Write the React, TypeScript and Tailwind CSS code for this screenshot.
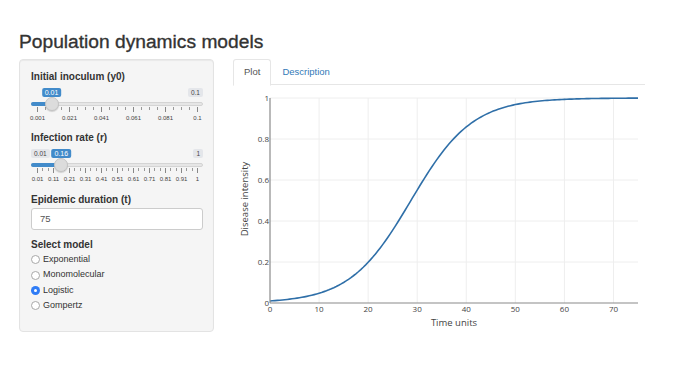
import React from "react";

type SliderProps = {
  value: number;
  min: number;
  max: number;
  valueLabel: string;
  minLabel?: string;
  maxLabel: string;
  ticks: string[];
  minor: number;
};

function Slider({ value, min, max, valueLabel, minLabel, maxLabel, ticks, minor }: SliderProps) {
  const frac = (value - min) / (max - min);
  const hx = 6 + frac * 160;
  const n = ticks.length - 1;
  const majors = ticks.map((t, i) => ({ t, x: 6 + (i * 160) / n }));
  const minors: number[] = [];
  for (let i = 0; i < n; i++) {
    for (let k = 1; k <= minor; k++) {
      minors.push(6 + ((i + k / (minor + 1)) * 160) / n);
    }
  }
  return (
    <div className="relative w-[172px] h-[34px] mt-[5px]">
      {minLabel && (
        <div className="absolute left-0 top-0 h-[9px] px-[3px] bg-[#e4e6ea] text-[#444] text-[6.5px] leading-[9px] rounded-[2px]">
          {minLabel}
        </div>
      )}
      <div className="absolute right-0 top-0 h-[9px] px-[3px] bg-[#e4e6ea] text-[#444] text-[6.5px] leading-[9px] rounded-[2px]">
        {maxLabel}
      </div>
      <div
        className="absolute top-0 h-[9px] px-[3px] bg-[#428bca] text-white text-[7px] leading-[9px] rounded-[2px] -translate-x-1/2"
        style={{ left: hx }}
      >
        {valueLabel}
      </div>
      <div className="absolute left-0 right-0 top-[14px] h-[4px] rounded-full bg-[#e6e6e6] border border-[#d4d4d4]" />
      <div className="absolute left-0 top-[14px] h-[4px] rounded-full bg-[#428bca]" style={{ width: hx }} />
      {majors.map((m, i) => (
        <div key={"M" + i} className="absolute top-[19px] w-px h-[5px] bg-[#888]" style={{ left: m.x }} />
      ))}
      {minors.map((x, i) => (
        <div key={"m" + i} className="absolute top-[19px] w-px h-[3px] bg-[#999]" style={{ left: x }} />
      ))}
      {majors.map((m, i) => (
        <div
          key={"L" + i}
          className="absolute top-[26px] text-[6px] leading-[8px] text-[#444] -translate-x-1/2 whitespace-nowrap"
          style={{ left: m.x + 0.5 }}
        >
          {m.t}
        </div>
      ))}
      <div
        className="absolute top-[9px] w-[14px] h-[14px] rounded-full bg-[#dcdcdc] border border-[#c4c4c4] -translate-x-1/2 shadow-[0_1px_1px_rgba(0,0,0,0.15)]"
        style={{ left: hx }}
      />
    </div>
  );
}

function Radio({ label, checked }: { label: string; checked?: boolean }) {
  return (
    <div className="flex items-center h-[15.4px]">
      {checked ? (
        <div className="w-[9px] h-[9px] rounded-full bg-[#2f7cf6] flex items-center justify-center">
          <div className="w-[3px] h-[3px] rounded-full bg-white" />
        </div>
      ) : (
        <div className="w-[9px] h-[9px] rounded-full bg-white border border-[#a8a8a8]" />
      )}
      <span className="ml-[3px] text-[9px] text-[#333]">{label}</span>
    </div>
  );
}

function Plot() {
  const X0 = 37;
  const sx = 368 / 75;
  const Y0 = 218;
  const sy = 205;
  const pts: string[] = [];
  for (let t = 0; t <= 75; t += 0.5) {
    const y = 1 / (1 + (1 / 0.01 - 1) * Math.exp(-0.16 * t));
    pts.push(`${(X0 + t * sx).toFixed(2)},${(Y0 - y * sy).toFixed(2)}`);
  }
  const xt = [0, 10, 20, 30, 40, 50, 60, 70];
  const yt = [0, 0.2, 0.4, 0.6, 0.8, 1];
  const f = "'Open Sans', 'DejaVu Sans', sans-serif";
  return (
    <svg width="412" height="255" className="block">
      {xt.slice(1).map((t) => (
        <line key={"gx" + t} x1={X0 + t * sx} x2={X0 + t * sx} y1={13} y2={Y0} stroke="#eeeeee" strokeWidth="1" />
      ))}
      {yt.slice(1).map((v) => (
        <line key={"gy" + v} x1={X0} x2={405} y1={Y0 - v * sy} y2={Y0 - v * sy} stroke="#eeeeee" strokeWidth="1" />
      ))}
      <polyline points={pts.join(" ")} fill="none" stroke="#2f6fa8" strokeWidth="1.6" />
      <line x1={X0} x2={X0} y1={13} y2={Y0} stroke="#8a8a8a" strokeWidth="1.2" />
      <line x1={X0} x2={405} y1={Y0} y2={Y0} stroke="#8a8a8a" strokeWidth="1.2" />
      {yt.map((v) => (
        <text
          key={"ty" + v}
          x={X0 - 1}
          y={Y0 - v * sy + 3}
          textAnchor="end"
          fontSize="8"
          fill="#444"
          fontFamily={f}
        >
          {v === 0 ? "0" : v === 1 ? "1" : v.toFixed(1)}
        </text>
      ))}
      {xt.map((t) => (
        <text key={"tx" + t} x={X0 + t * sx} y={227} textAnchor="middle" fontSize="8" fill="#444" fontFamily={f}>
          {t}
        </text>
      ))}
      <text x={221} y={241} textAnchor="middle" fontSize="9.5" fill="#444" fontFamily={f}>
        Time units
      </text>
      <text
        x={0}
        y={0}
        textAnchor="middle"
        fontSize="9.5"
        fill="#444"
        fontFamily={f}
        transform="translate(14.5,114) rotate(-90)"
      >
        Disease intensity
      </text>
    </svg>
  );
}

export default function App() {
  return (
    <div
      className="w-[680px] h-[377px] bg-white pl-[19px] pt-[31px] overflow-hidden"
      style={{ fontFamily: "'Liberation Sans', Arial, sans-serif" }}
    >
      <h1 className="text-[19.2px] leading-[22px] text-[#333] font-normal m-0 [-webkit-text-stroke:0.35px_#333]">
        Population dynamics models
      </h1>
      <div className="flex mt-[6px]">
        <div className="w-[195px] h-[273px] bg-[#f5f5f5] border border-[#e3e3e3] rounded-[4px] pl-[11px] pt-[11px] shadow-[inset_0_1px_1px_rgba(0,0,0,0.05)]">
          <div className="text-[10px] leading-[12px] font-bold text-[#333]">Initial inoculum (y0)</div>
          <Slider
            value={0.01}
            min={0.001}
            max={0.1}
            valueLabel="0.01"
            maxLabel="0.1"
            ticks={["0.001", "0.021", "0.041", "0.061", "0.081", "0.1"]}
            minor={3}
          />
          <div className="text-[10px] leading-[12px] font-bold text-[#333] mt-[10px]">Infection rate (r)</div>
          <Slider
            value={0.16}
            min={0.01}
            max={1}
            valueLabel="0.16"
            minLabel="0.01"
            maxLabel="1"
            ticks={["0.01", "0.11", "0.21", "0.31", "0.41", "0.51", "0.61", "0.71", "0.81", "0.91", "1"]}
            minor={2}
          />
          <div className="text-[10px] leading-[12px] font-bold text-[#333] mt-[11px]">Epidemic duration (t)</div>
          <div className="w-[172px] h-[22px] mt-[2px] bg-white border border-[#cccccc] rounded-[3px] flex items-center pl-[8px] text-[9.5px] text-[#555]">
            75
          </div>
          <div className="text-[10px] leading-[12px] font-bold text-[#333] mt-[9px]">Select model</div>
          <div className="mt-[1px]">
            <Radio label="Exponential" />
            <Radio label="Monomolecular" />
            <Radio label="Logistic" checked />
            <Radio label="Gompertz" />
          </div>
        </div>
        <div className="ml-[19px] w-[412px]">
          <div className="flex h-[26px] border-b border-[#e6e6e6]">
            <div className="h-[27px] px-[10px] flex items-center bg-white border border-[#e6e6e6] border-b-white rounded-t-[3px] text-[9.5px] text-[#555]">
              Plot
            </div>
            <div className="h-[26px] px-[11px] flex items-center text-[9.5px] text-[#337ab7]">Description</div>
          </div>
          <Plot />
        </div>
      </div>
    </div>
  );
}
